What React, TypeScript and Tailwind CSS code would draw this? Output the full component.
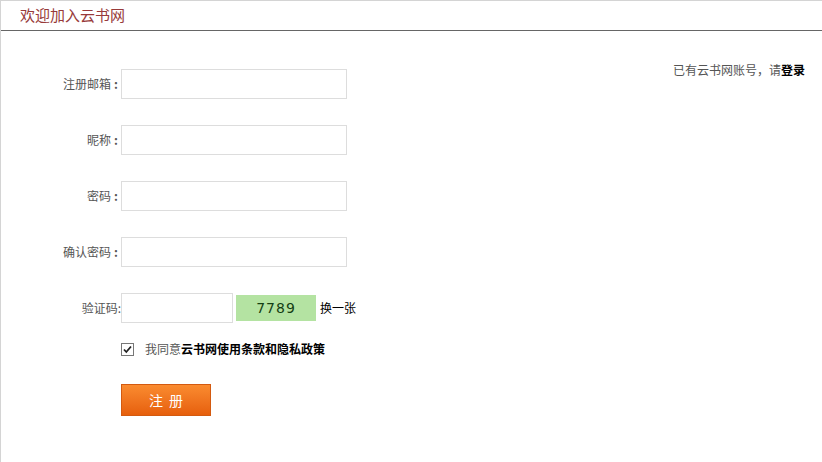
import React, { useState } from 'react';

const font = { fontFamily: '"Noto Sans CJK SC", "Noto Sans", sans-serif' };

const fields = [
  { label: '注册邮箱', type: 'text' },
  { label: '昵称', type: 'text' },
  { label: '密码', type: 'password' },
  { label: '确认密码', type: 'password' },
];

export default function App() {
  const [agree, setAgree] = useState(true);

  return (
    <div className="h-[462px] w-[822px] bg-white border-l border-t border-[#d4d4d4] text-[12px] text-[#555]" style={font}>
      {/* Header */}
      <div className="h-[30px] border-b border-[#666] pl-[19px] flex items-center">
        <span className="text-[15px] leading-none text-[#983a3a] -mt-[2px]">欢迎加入云书网</span>
      </div>

      <div className="flex justify-between">
        {/* Form */}
        <div className="pt-[38px]">
          {fields.map((f) => (
            <div key={f.label} className="flex items-center h-[30px] mb-[26px]">
              <label className="w-[120px] text-right">
                {f.label}
                <span className="font-bold ml-[3px] mr-[3px]">:</span>
              </label>
              <input type={f.type} className="w-[226px] h-[30px] border border-[#ddd] outline-none px-2" />
            </div>
          ))}

          <div className="flex items-center h-[30px]">
            <label className="w-[120px] text-right">验证码:</label>
            <input type="text" className="w-[112px] h-[30px] border border-[#ddd] outline-none px-2" />
            <div className="ml-[3px] w-[80px] h-[26px] bg-[#b4e3a2] flex items-center justify-center">
              <span className="text-[14px] text-[#143f14] tracking-[1px]" style={{ fontFamily: '"DejaVu Sans", sans-serif' }}>7789</span>
            </div>
            <span className="ml-[4px] text-black">换一张</span>
          </div>

          <div className="flex items-center mt-[18px] pl-[120px] h-[16px]">
            <label className="relative w-[13px] h-[13px] border border-[#777] bg-white cursor-pointer">
              <input
                type="checkbox"
                checked={agree}
                onChange={(e) => setAgree(e.target.checked)}
                className="absolute inset-0 opacity-0 m-0"
              />
              {agree && (
                <svg viewBox="0 0 11 11" className="absolute inset-0 w-[11px] h-[11px]">
                  <path d="M2 5.5 L4.3 8 L9 2.5" fill="none" stroke="#222" strokeWidth="1.8" />
                </svg>
              )}
            </label>
            <span className="ml-[11px]">我同意</span>
            <span className="font-bold text-black">云书网使用条款和隐私政策</span>
          </div>

          <div className="pl-[120px] mt-[27px]">
            <button className="w-[90px] h-[32px] bg-gradient-to-b from-[#fa8b2f] to-[#e65f0b] border border-[#d35a10] text-white text-[14px] tracking-[6px] pl-[6px]">
              注册
            </button>
          </div>
        </div>

        {/* Login hint */}
        <div className="pt-[30px] pr-[17px]">
          <span>已有云书网账号，请</span>
          <a className="font-bold text-black cursor-pointer">登录</a>
        </div>
      </div>
    </div>
  );
}
